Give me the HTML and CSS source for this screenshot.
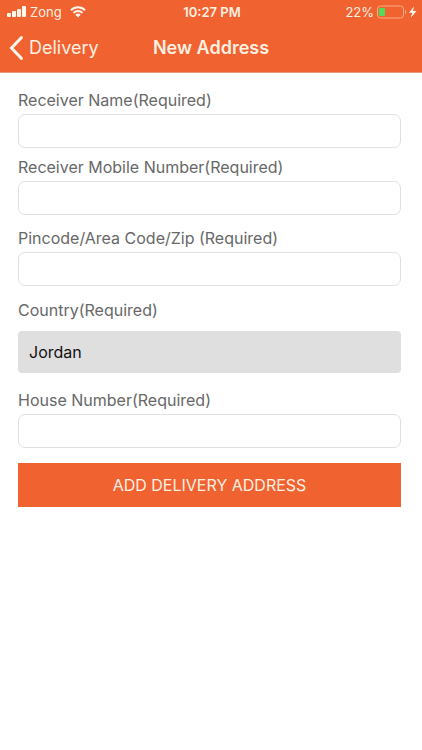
FILE: index.html
```html
<!DOCTYPE html>
<html lang="en">
<head>
<meta charset="utf-8">
<meta name="viewport" content="width=device-width, initial-scale=1">
<title>New Address</title>
<link rel="stylesheet" href="styles.css">
</head>
<body>
<header class="header">
  <div class="status">
    <div class="status-side">
      <svg class="signal" width="20" height="12" viewBox="0 0 20 12" aria-hidden="true"><rect x="0" y="7" width="4" height="4" rx="1"/><rect x="5" y="5" width="4" height="6" rx="1"/><rect x="10" y="3" width="4" height="8" rx="1"/><rect x="15" y="0" width="4" height="11" rx="1"/></svg>
      <span class="carrier">Zong</span>
      <svg class="wifi" width="16" height="12" viewBox="0 0 16 12" aria-hidden="true"><path d="M1 4.2a10 10 0 0 1 14 0M3.500 6.900a6.400 6.400 0 0 1 9 0"/><path class="solid" d="M8 11.500 5.300 8.800a3.900 3.900 0 0 1 5.400 0z"/></svg>
    </div>
    <span class="time">10:27 PM</span>
    <div class="status-side status-end">
      <span>22%</span>
      <svg class="battery" width="40" height="14" viewBox="0 0 40 14" aria-hidden="true"><rect class="shell" x=".5" y="1" width="26" height="12" rx="3"/><rect class="charge" x="2" y="3" width="6" height="8" rx="1"/><path class="cap" d="M28 4.500q2.500 2.500 0 5z"/><path class="bolt" d="m37 1.500-5 6.300h3.200l-1.400 5L39.500 6H36z"/></svg>
    </div>
  </div>
  <nav class="nav">
    <a class="back" href="#"><svg width="15" height="26" viewBox="0 0 15 26" aria-hidden="true"><path d="M12.500 2.500 2.500 13l10 10.500"/></svg>Delivery</a>
    <h1 class="title">New Address</h1>
  </nav>
</header>
<main>
  <form class="form">
    <div class="field"><label for="name">Receiver Name(Required)</label><input id="name" type="text"></div>
    <div class="field"><label for="mobile">Receiver Mobile Number(Required)</label><input id="mobile" type="tel"></div>
    <div class="field field-spaced"><label for="zip">Pincode/Area Code/Zip (Required)</label><input id="zip" type="text"></div>
    <div class="field field-country"><label for="country">Country(Required)</label><select id="country"><option>Jordan</option></select></div>
    <div class="field field-house"><label for="house">House Number(Required)</label><input id="house" type="text"></div>
    <button class="submit" type="button">ADD DELIVERY ADDRESS</button>
  </form>
</main>
</body>
</html>
```
FILE: styles.css
```css
* { box-sizing: border-box; }
body {
  margin: 0;
  background: #fff;
  color: #686868;
  font-family: Inter, "Liberation Sans", sans-serif;
  font-size: 16px;
  line-height: 20px;
}
.header {
  background: #f06230;
  color: #fff0e2;
  border-bottom: 1px solid #e99a7c;
}
.status {
  display: grid;
  grid-template-columns: 1fr auto 1fr;
  align-items: center;
  height: 24px;
  padding: 0 5px 0 7px;
  font-size: 13px;
}
.status-side { display: flex; align-items: center; }
.status-end { justify-content: flex-end; gap: 3px; }
.signal { fill: #fff6ec; margin-right: 3px; }
.carrier { margin-right: 8px; }
.wifi { fill: none; stroke: #fff6ec; stroke-width: 2; }
.wifi .solid { fill: #fff6ec; stroke: none; }
.time { font-weight: 600; }
.shell { fill: none; stroke: #f9ab83; stroke-width: 1; }
.charge { fill: #4fdc5c; }
.cap { fill: #f9ab83; }
.bolt { fill: #fff6ec; }
.nav {
  display: grid;
  grid-template-columns: 1fr auto 1fr;
  align-items: center;
  height: 48px;
  padding: 0 9px;
}
.back {
  display: flex;
  align-items: center;
  gap: 5px;
  color: inherit;
  font-size: 18px;
  text-decoration: none;
}
.back svg { fill: none; stroke: #fff6ec; stroke-width: 3; stroke-linecap: round; }
.title { margin: 0; font-size: 18px; font-weight: 600; }
.form {
  display: flex;
  flex-direction: column;
  padding: 17px 21px 17px 18px;
}
.field { display: flex; flex-direction: column; gap: 4px; margin-bottom: 9px; }
.field-spaced { margin-top: 4px; margin-bottom: 14px; }
.field-country { gap: 11px; margin-bottom: 17px; }
.field-house { margin-bottom: 15px; }
input, select, button { width: 100%; margin: 0; font: inherit; }
input {
  height: 34px;
  padding: 0 11px;
  border: 1px solid #e0e0e0;
  border-radius: 7px;
  background: #fff;
}
select {
  height: 42px;
  padding: 0 11px;
  border: 0;
  border-radius: 4px;
  background: #dfdfdf;
  color: #111;
  appearance: none;
}
.submit {
  height: 44px;
  border: 0;
  background: #f06230;
  color: #fff0e2;
}
```
